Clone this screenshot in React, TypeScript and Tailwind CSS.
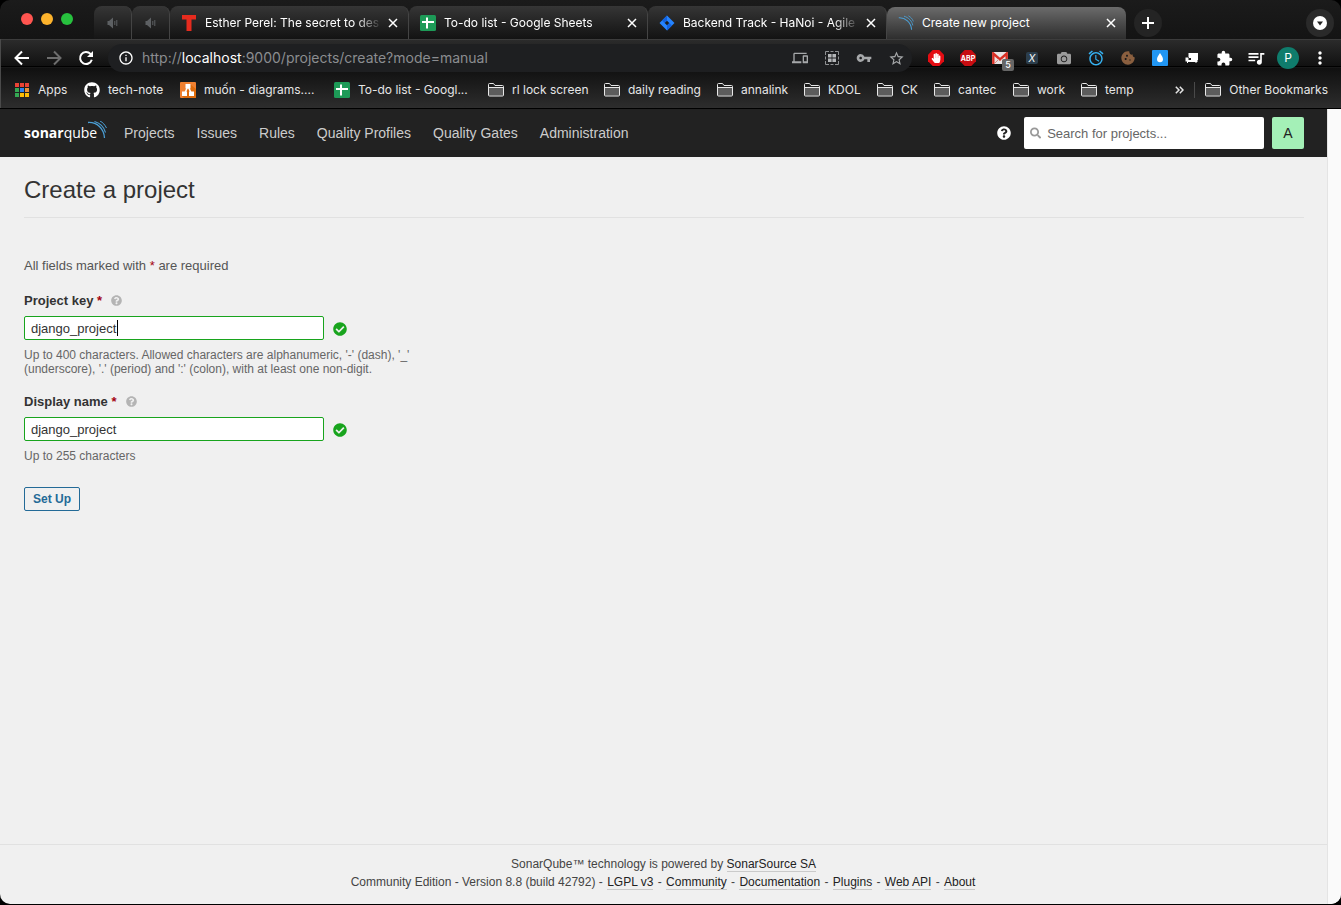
import React, { useState } from "react";
import { FaCamera, FaCheckCircle, FaGithub, FaHandPaper, FaQuestionCircle, FaSearch } from "react-icons/fa";
import {
  MdAlarm,
  MdCookie,
  MdExtension,
  MdInfoOutline,
  MdMoreVert,
  MdOutlineDevices,
  MdQueueMusic,
  MdStarBorder,
  MdVpnKey,
} from "react-icons/md";

const CloseIcon = () => (
  <svg width="14" height="14" viewBox="0 0 14 14" stroke="#fff" strokeWidth="1.500" aria-hidden="true">
    <path d="m3 3 8 8M11 3l-8 8" />
  </svg>
);

const PlusIcon = () => (
  <svg width="14" height="14" viewBox="0 0 14 14" stroke="#fff" strokeWidth="2" aria-hidden="true">
    <path d="M7 1v12M1 7h12" />
  </svg>
);

const BackIcon = () => (
  <svg width="16" height="16" viewBox="0 0 16 16" fill="none" stroke="currentColor" strokeWidth="2" aria-hidden="true">
    <path d="M15 8H2.500M8 1.500 1.500 8 8 14.500" />
  </svg>
);

const ForwardIcon = () => (
  <svg width="16" height="16" viewBox="0 0 16 16" fill="none" stroke="currentColor" strokeWidth="2" aria-hidden="true">
    <path d="M1 8h12.500M8 1.500 14.500 8 8 14.500" />
  </svg>
);

const ReloadIcon = () => (
  <svg width="16" height="16" viewBox="0 0 16 16" fill="none" aria-hidden="true">
    <path d="M13.800 9.800A6 6 0 1 1 12.500 3.900L14 5.400" stroke="#fff" strokeWidth="2" />
    <path d="M15 1v6H9z" fill="#fff" />
  </svg>
);

const SoundIcon = () => (
  <svg width="12" height="12" viewBox="0 0 12 12" aria-hidden="true">
    <path d="M.5 4H2L6 .5v11L2 8H.5z" fill="#5d6063" />
    <path d="M7.800 4v4M9.800 3v6" stroke="#5d6063" strokeWidth="1" />
  </svg>
);

const SheetsIcon = () => (
  <svg width="16" height="16" viewBox="0 0 16 16" aria-hidden="true">
    <rect width="16" height="16" rx="1.500" fill="#1d9a57" />
    <path d="M7 2.500v11M2 7h12" stroke="#fff" strokeWidth="2" />
  </svg>
);

const TedIcon = () => (
  <svg width="16" height="16" viewBox="0 0 16 16" aria-hidden="true">
    <path d="M1 0h14v4.500h-4.500V16h-5V4.500H1z" fill="#e62b1e" />
  </svg>
);

const JiraIcon = () => (
  <svg width="16" height="16" viewBox="0 0 16 16" aria-hidden="true">
    <path d="M8 .5 15.500 8 8 15.500.5 8z" fill="#2684ff" />
    <path d="M8 .5v5L5.500 8 3 5.500zM8 15.500v-5L10.500 8l2.500 2.500z" fill="#1263e0" />
    <path d="M8 5.700 10.300 8 8 10.300 5.700 8z" fill="#1c1c1c" />
  </svg>
);

const Waves = ({ size }: { size: number }) => (
  <svg width={size} height={size} viewBox="0 0 20 20" fill="none" stroke="#4b9fd5" aria-hidden="true">
    <path d="M1 3.500C9 3 16.500 9 17 18.500" strokeWidth="1.300" />
    <path d="M7.500 1.500C13 3 17.500 7.500 18.500 13" strokeWidth="1.100" />
    <path d="M13 1c3 1.500 5 4 6.200 7" strokeWidth="1" />
  </svg>
);

const FolderIcon = () => (
  <svg width="16" height="14" viewBox="0 0 16 14" fill="none" stroke="#e8e8e8" aria-hidden="true">
    <path d="M1 5h14v7.500H1z" fill="#5c5c5c" stroke="none" />
    <path d="M.5 12V1.500q0-1 1-1h4l1.500 2h7.500q1 0 1 1V12q0 1-1 1h-13q-1 0-1-1z" />
    <path d="M.5 4.500h15" />
  </svg>
);

const AppsIcon = () => (
  <svg width="14" height="14" viewBox="0 0 14 14" aria-hidden="true">
    <path d="M0 0h4v4H0zM5 0h4v4H5zM10 0h4v4h-4z" fill="#ea4335" />
    <path d="M0 5h4v4H0z" fill="#34a853" />
    <path d="M5 5h4v4H5z" fill="#2d83f0" />
    <path d="M10 5h4v4h-4z" fill="#e8913a" />
    <path d="M0 10h4v4H0z" fill="#34a853" />
    <path d="M5 10h4v4H5zM10 10h4v4h-4z" fill="#fbbc05" />
  </svg>
);

const DiagramsIcon = () => (
  <svg width="16" height="16" viewBox="0 0 16 16" aria-hidden="true">
    <rect width="16" height="16" rx="1" fill="#f08030" />
    <path d="M16 16V7L10 2l-8 12 2 2z" fill="#df6c0c" />
    <path d="M8 4 4.500 12M8 4l3.500 8" stroke="#fff" strokeWidth="1.600" />
    <path d="M5.500 2h5v4.500h-5zM2 9.500h5V14H2zM9 9.500h5V14H9z" fill="#fff" />
  </svg>
);

const GridScanIcon = () => (
  <svg width="14" height="14" viewBox="0 0 14 14" fill="none" aria-hidden="true">
    <path
      d="M.5 4V.5H4M5.500.5h3M10 .5h3.500V4M13.500 5.500v3M13.500 10v3.500H10M8.500 13.500h-3M4 13.500H.5V10M.5 8.500v-3"
      stroke="#8f9193"
    />
    <path d="M3 3h3.600v3.600H3zM7.400 3H11v3.600H7.400zM3 7.400h3.600V11H3zM7.400 7.400H11V11H7.400z" fill="#b4b6b8" />
  </svg>
);

const Octagon = ({ fill }: { fill: string }) => (
  <svg width="16" height="16" viewBox="0 0 16 16" aria-hidden="true" className="col-start-1 row-start-1">
    <path d="M4.700 0h6.600L16 4.700v6.600L11.300 16H4.700L0 11.300V4.700z" fill={fill} />
  </svg>
);

const MailIcon = () => (
  <svg width="16" height="12" viewBox="0 0 16 12" aria-hidden="true">
    <rect width="16" height="12" rx="1" fill="#e9e4e4" />
    <path d="M1.300 12V1.500L8 7.500l6.700-6V12" fill="none" stroke="#d93025" strokeWidth="2.400" />
    <path d="M3 11 7 7M13 11 9 7" stroke="#d98a85" strokeWidth="1" />
  </svg>
);

const DropIcon = () => (
  <svg width="16" height="16" viewBox="0 0 16 16" aria-hidden="true">
    <rect width="16" height="16" rx="1" fill="#2196f3" />
    <path d="M8 3c1.500 2.500 3 4 3 6.300a3 3 0 0 1-6 0C5 7 6.500 5.500 8 3z" fill="#fff" />
  </svg>
);

const SofaIcon = () => (
  <svg width="14" height="12" viewBox="0 0 14 12" aria-hidden="true">
    <path d="M3.500 1H13v7h-1V6H4.500V5h-1z" fill="#fff" />
    <path d="M4 2h8.500v6H6V6H4z" fill="#fff" />
    <path d="M.5 5.500h3V8h9v2h-1v1h-1v-1H3v1H2v-1.500H.5z" fill="#fff" />
  </svg>
);

const CLOSED_TABS = [
  { title: "Esther Perel: The secret to des", icon: <TedIcon /> },
  { title: "To-do list - Google Sheets", icon: <SheetsIcon /> },
  { title: "Backend Track - HaNoi - Agile", icon: <JiraIcon /> },
];

const BOOKMARKS = [
  { label: "Apps", icon: <AppsIcon />, width: "w-[70px]" },
  { label: "tech-note", icon: <FaGithub className="text-base text-white" />, width: "w-[96px]" },
  { label: "muốn - diagrams....", icon: <DiagramsIcon />, width: "w-[154px]" },
  { label: "To-do list - Googl...", icon: <SheetsIcon />, width: "w-[154px]" },
  { label: "rl lock screen", icon: <FolderIcon />, width: "w-[116px]" },
  { label: "daily reading", icon: <FolderIcon />, width: "w-[113px]" },
  { label: "annalink", icon: <FolderIcon />, width: "w-[87px]" },
  { label: "KDOL", icon: <FolderIcon />, width: "w-[73px]" },
  { label: "CK", icon: <FolderIcon />, width: "w-[57px]" },
  { label: "cantec", icon: <FolderIcon />, width: "w-[79px]" },
  { label: "work", icon: <FolderIcon />, width: "w-[68px]" },
  { label: "temp", icon: <FolderIcon />, width: "w-[60px]" },
];

const EXTENSIONS = [
  {
    name: "AdBlock",
    icon: (
      <span className="grid place-items-center">
        <Octagon fill="#e40d13" />
        <FaHandPaper className="col-start-1 row-start-1 text-[10px] text-white" />
      </span>
    ),
  },
  {
    name: "Adblock Plus",
    icon: (
      <span className="grid place-items-center">
        <Octagon fill="#c70d12" />
        <span className="col-start-1 row-start-1 text-[7px] font-bold leading-none text-white">ABP</span>
      </span>
    ),
  },
  {
    name: "Mail checker",
    icon: (
      <span className="relative">
        <MailIcon />
        <span className="absolute left-[10px] top-[7px] flex h-3 w-3 items-center justify-center rounded-xs bg-[#666] text-[9px] font-medium text-white">
          5
        </span>
      </span>
    ),
  },
  {
    name: "XPath",
    icon: (
      <span className="flex h-3 w-3 items-center justify-center rounded-xs bg-[#2c3e4c] text-[10px] italic text-white">
        X
      </span>
    ),
  },
  { name: "Screenshot", icon: <FaCamera className="text-sm text-[#9b9b9b]" /> },
  { name: "Alarm", icon: <MdAlarm className="text-[18px] text-[#35b1f1]" /> },
  { name: "Cookies", icon: <MdCookie className="text-base text-[#8a5f3f]" /> },
  { name: "Drop", icon: <DropIcon /> },
  { name: "Sofa", icon: <SofaIcon /> },
  { name: "Extensions", icon: <MdExtension className="text-[17px] text-white" /> },
  { name: "Media", icon: <MdQueueMusic className="text-xl text-white" /> },
  {
    name: "Profile",
    icon: (
      <span className="flex h-[22px] w-[22px] items-center justify-center rounded-full bg-[#0f7c6c] text-xs text-white">
        P
      </span>
    ),
  },
  { name: "Menu", icon: <MdMoreVert className="text-xl text-white" /> },
];

const NAV = ["Projects", "Issues", "Rules", "Quality Profiles", "Quality Gates", "Administration"];
const FOOTER_LINKS = ["LGPL v3", "Community", "Documentation", "Plugins", "Web API", "About"];

function TabStrip() {
  return (
    <div className="flex h-[39px] items-end bg-gradient-to-b from-[#1b1b1b] to-[#141414] pr-[7px]">
      <div className="flex w-[94px] shrink-0 gap-2 self-center pb-[2px] pl-[21px]">
        <span className="h-3 w-3 rounded-full bg-[#ff5550]" />
        <span className="h-3 w-3 rounded-full bg-[#fdb32c]" />
        <span className="h-3 w-3 rounded-full bg-[#27c13e]" />
      </div>
      {[0, 1].map((i) => (
        <button
          key={i}
          aria-label="Muted tab"
          className="flex h-[33px] w-[38px] shrink-0 items-center justify-center rounded-t-lg border-r border-[#444] bg-gradient-to-b from-[#363636] to-[#151515]"
        >
          <SoundIcon />
        </button>
      ))}
      {CLOSED_TABS.map((tab) => (
        <div
          key={tab.title}
          className="flex h-[33px] w-[239px] min-w-0 items-center rounded-t-lg border-r border-[#444] bg-gradient-to-b from-[#363636] to-[#131313] pl-[11px] pr-2"
        >
          {tab.icon}
          <span className="ml-2 min-w-0 flex-1 overflow-hidden whitespace-nowrap text-xs text-white [mask-image:linear-gradient(to_right,black_85%,transparent)]">
            {tab.title}
          </span>
          <button aria-label="Close tab" className="ml-1">
            <CloseIcon />
          </button>
        </div>
      ))}
      <div className="flex h-8 w-[239px] min-w-0 items-center rounded-t-lg bg-gradient-to-b from-[#6b6b6b] to-[#2e2e2e] pl-[11px] pr-2">
        <Waves size={16} />
        <span className="ml-2 flex-1 text-xs text-white">Create new project</span>
        <button aria-label="Close tab">
          <CloseIcon />
        </button>
      </div>
      <button
        aria-label="New tab"
        className="mb-[2px] ml-2 flex h-7 w-7 shrink-0 items-center justify-center rounded-full bg-[#242424]"
      >
        <PlusIcon />
      </button>
      <button
        aria-label="Search tabs"
        className="mb-[2px] ml-auto flex h-7 w-7 shrink-0 items-center justify-center rounded-full bg-[#2a2a2a]"
      >
        <svg width="14" height="14" viewBox="0 0 14 14" aria-hidden="true">
          <circle cx="7" cy="7" r="7" fill="#fff" />
          <path d="M4 5.500h6L7 9.500z" fill="#222" />
        </svg>
      </button>
    </div>
  );
}

function Toolbar() {
  return (
    <div className="flex h-[38px] items-center pl-[6px] pr-[5px]">
      <button aria-label="Back" className="flex w-8 justify-center text-white">
        <BackIcon />
      </button>
      <button aria-label="Forward" className="flex w-8 justify-center text-[#6d6d6d]">
        <ForwardIcon />
      </button>
      <button aria-label="Reload" className="mr-[6px] flex w-8 justify-center">
        <ReloadIcon />
      </button>
      <div className="flex h-7 flex-1 items-center rounded-full bg-[#1e1f21] pl-[10px] text-[#a6a8aa]">
        <MdInfoOutline className="text-base text-white" />
        <span className="ml-2 flex-1 whitespace-nowrap text-sm text-[#8b8d90]">
          http://<span className="text-white">localhost</span>:9000/projects/create?mode=manual
        </span>
        <button aria-label="Send to device" className="flex w-8 justify-center text-base">
          <MdOutlineDevices />
        </button>
        <button aria-label="Scan" className="flex w-8 justify-center">
          <GridScanIcon />
        </button>
        <button aria-label="Passwords" className="flex w-8 justify-center text-base">
          <MdVpnKey />
        </button>
        <button aria-label="Bookmark" className="flex w-8 justify-center text-[17px]">
          <MdStarBorder />
        </button>
      </div>
      <div className="ml-2 flex">
        {EXTENSIONS.map((ext) => (
          <button key={ext.name} aria-label={ext.name} className="flex h-6 w-8 items-center justify-center">
            {ext.icon}
          </button>
        ))}
      </div>
    </div>
  );
}

function BookmarksBar() {
  return (
    <div className="flex h-[26px] items-center pl-[14px] pr-[13px] text-xs text-[#e6e6e6]">
      {BOOKMARKS.map((b) => (
        <a key={b.label} href="#" className={`flex shrink-0 items-center ${b.width}`}>
          <span className="flex w-4 justify-center">{b.icon}</span>
          <span className="ml-2 whitespace-nowrap">{b.label}</span>
        </a>
      ))}
      <button aria-label="More bookmarks" className="ml-auto mr-[10px]">
        <svg width="9" height="8" viewBox="0 0 9 8" fill="none" stroke="#e6e6e6" strokeWidth="1.500" aria-hidden="true">
          <path d="M.8.8 4 4 .8 7.200M4.800.8 8 4 4.800 7.200" />
        </svg>
      </button>
      <span className="mr-[10px] h-4 w-px bg-[#4a4a4a]" />
      <a href="#" className="flex items-center whitespace-nowrap">
        <FolderIcon />
        <span className="ml-2">Other Bookmarks</span>
      </a>
    </div>
  );
}

function Field({
  id,
  label,
  hint,
  caret,
}: {
  id: string;
  label: string;
  hint: string;
  caret?: boolean;
}) {
  const [value, setValue] = useState("django_project");
  return (
    <div className="mb-4">
      <div className="flex h-4 items-center">
        <label htmlFor={id} className="font-bold text-[#333]">
          {label} <span className="text-[#a4030f]">*</span>
        </label>
        <FaQuestionCircle className="mb-px ml-[9px] text-[11px] text-[#b4b4b4]" />
      </div>
      <div className="mt-[7px] flex items-center">
        <div className="relative">
          <input
            id={id}
            value={value}
            onChange={(e) => setValue(e.target.value)}
            className="block h-6 w-[300px] rounded-xs border border-[#18a41d] bg-white px-[6px] text-[#333] outline-none"
          />
          {caret && <span className="absolute left-[93px] top-1 h-4 w-px bg-black" />}
        </div>
        <FaCheckCircle className="ml-[9px] mt-[2px] text-sm text-[#18a41d]" />
      </div>
      <p className="mt-2 max-w-[400px] text-xs leading-[14px] text-[#666]">{hint}</p>
    </div>
  );
}

function SonarPage() {
  return (
    <div className="flex flex-1 bg-[#f0f0f0] font-['Liberation_Sans',Arial,sans-serif] text-[13px]">
      <div className="flex min-w-0 flex-1 flex-col">
        <nav className="flex h-12 items-center bg-[#222] pl-6 pr-[23px]">
          <a href="#" aria-label="SonarQube" className="mr-[17px] flex w-[83px]">
            <svg width="83" height="24" viewBox="0 0 83 24" aria-hidden="true">
              <text x="0" y="17" fill="#fff" fontFamily="Open Sans" fontSize="14">
                <tspan fontWeight="700">sonar</tspan>
                <tspan fontWeight="400">qube</tspan>
              </text>
              <g fill="none" stroke="#4b9fd5">
                <path d="M64 1.500c9-.5 16 6 16.500 15.500" strokeWidth="1.300" />
                <path d="M70.500.5c5 1.500 9.500 5.500 11 11" strokeWidth="1.100" />
                <path d="M76 0c3 1.500 5 4 6.500 7" strokeWidth="1" />
              </g>
            </svg>
          </a>
          <div className="flex gap-[22px] whitespace-nowrap text-sm text-[#ccc]">
            {NAV.map((item) => (
              <a key={item} href="#">
                {item}
              </a>
            ))}
          </div>
          <button aria-label="Help" className="ml-auto mr-[13px] text-sm text-white">
            <FaQuestionCircle />
          </button>
          <label className="flex h-8 w-60 items-center rounded-xs bg-white pl-[6px] text-[#999]">
            <FaSearch className="text-xs" />
            <input
              type="search"
              aria-label="Search for projects"
              placeholder="Search for projects..."
              className="ml-[6px] w-full bg-transparent pt-[2px] outline-none placeholder:text-[#666]"
            />
          </label>
          <button className="ml-2 h-8 w-8 rounded-xs bg-[#a4f0b7] text-sm text-[#222]">A</button>
        </nav>

        <main className="flex-1 pl-6 pr-[23px] pt-[17px]">
          <h1 className="border-b border-[#e1e1e1] pb-[11px] text-2xl leading-8 text-[#333]">Create a project</h1>
          <form className="pt-[39px]" onSubmit={(e) => e.preventDefault()}>
            <p className="mb-[18px] leading-[18px] text-[#555]">
              All fields marked with <span className="text-[#a4030f]">*</span> are required
            </p>
            <div className="flex flex-col gap-[2px]">
              <Field
                id="project-key"
                label="Project key"
                caret
                hint="Up to 400 characters. Allowed characters are alphanumeric, '-' (dash), '_' (underscore), '.' (period) and ':' (colon), with at least one non-digit."
              />
              <Field id="display-name" label="Display name" hint="Up to 255 characters" />
            </div>
            <button
              type="submit"
              className="mt-2 h-6 rounded-xs border border-[#236a97] px-2 text-xs font-bold text-[#236a97]"
            >
              Set Up
            </button>
          </form>
        </main>

        <footer className="border-t border-[#e1e1e1] pb-[13px] pt-[10px] text-center text-xs leading-[18px] text-[#444]">
          <div>
            SonarQube™ technology is powered by{" "}
            <a href="#" className="border-b border-[#cacaca] text-[#222]">
              SonarSource SA
            </a>
          </div>
          <div>
            Community Edition - Version 8.8 (build 42792)
            {FOOTER_LINKS.map((link) => (
              <React.Fragment key={link}>
                {" - "}
                <a href="#" className="mx-px border-b border-[#cacaca] text-[#222]">
                  {link}
                </a>
              </React.Fragment>
            ))}
          </div>
        </footer>
      </div>
      <div className="w-[14px] shrink-0 border-l border-[#e4e4e4] bg-[#fafafa]" />
    </div>
  );
}

export default function App() {
  return (
    <div className="min-h-screen bg-black pb-px font-[Inter,sans-serif]">
      <div className="flex min-h-[calc(100vh-1px)] flex-col overflow-hidden rounded-[10px]">
        <TabStrip />
        <header className="border-b border-black bg-[linear-gradient(#3c3c3c_0,#3c3c3c_1px,#2b2b2b_1px,#111_27px,#000_27px,#000_28px,#202020_28px,#101010_29px,#2d2d2d_69px)] pb-[5px] shadow-[inset_1px_0_0_#4a4a4a]">
          <Toolbar />
          <BookmarksBar />
        </header>
        <SonarPage />
      </div>
    </div>
  );
}
